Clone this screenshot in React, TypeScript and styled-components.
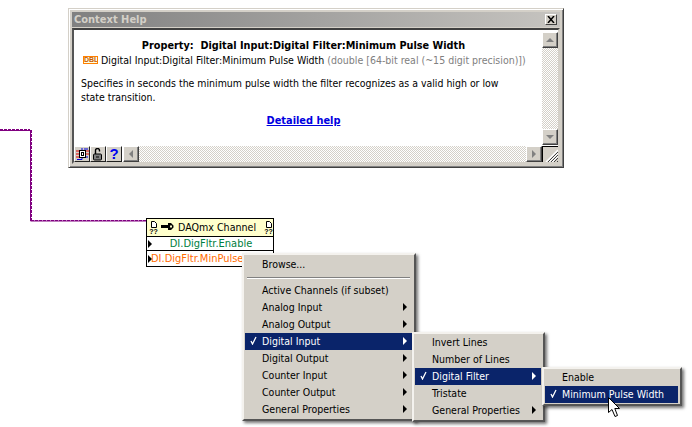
import React from "react";
import styled, { createGlobalStyle } from "styled-components";

const Global = createGlobalStyle`
  html, body { margin: 0; padding: 0; background: #fff; }
  body { font-family: "DejaVu Sans Condensed", "DejaVu Sans", sans-serif; font-size: 11px; color: #000; }
`;

const Canvas = styled.div`
  position: relative;
  width: 692px;
  height: 427px;
  overflow: hidden;
  background: #fff;
`;

const WireDrawing = styled.svg`
  position: absolute;
  left: 0;
  top: 0;
`;

/* ---------- Context Help window ---------- */
const HelpWindow = styled.section`
  position: absolute;
  left: 68px;
  top: 8px;
  box-sizing: border-box;
  width: 496px;
  height: 160px;
  padding: 3px;
  display: flex;
  flex-direction: column;
  gap: 1px;
  background: #d4d0c8;
  border: 1px solid;
  border-color: #d4d0c8 #404040 #404040 #d4d0c8;
  box-shadow: inset 1px 1px #fff, inset -1px -1px #808080;
`;

const TitleBar = styled.header`
  height: 15px;
  flex: none;
  display: flex;
  align-items: center;
  justify-content: space-between;
  padding: 0 3px 0 2px;
  background: linear-gradient(90deg, #808080, #c6c4c0);
  color: #d4d0c8;
  font-weight: bold;
  font-size: 11px;
`;

const CloseButton = styled.span`
  width: 12px;
  height: 11px;
  box-sizing: border-box;
  display: flex;
  align-items: center;
  justify-content: center;
  background: #d4d0c8;
  border: 1px solid;
  border-color: #fff #404040 #404040 #fff;
`;

const Body = styled.div`
  flex: 1;
  min-height: 0;
  display: flex;
  flex-direction: column;
  border: 2px solid;
  border-color: #404040 #d4d0c8 #d4d0c8 #555;
`;

const ContentRow = styled.div`
  flex: 1;
  min-height: 0;
  display: flex;
`;

const HelpText = styled.div`
  flex: 1;
  background: #fff;
  padding: 9px 10px 0 7px;
  line-height: 14px;
  font-size: 10.45px;
`;

const HelpTitle = styled.div`
  text-align: center;
  font-weight: bold;
  font-size: 10.8px;
  padding-right: 6px;
`;

const Signature = styled.div`
  display: flex;
  align-items: center;
  gap: 3px;
  margin: 0 0 0 2px;
  white-space: nowrap;
  font-size: 10.5px;
`;

const TypeChip = styled.span`
  width: 15px;
  height: 8px;
  box-sizing: border-box;
  border: 1px solid #ff8000;
  background: #ffffe0;
  color: #c85a00;
  font: bold 7px/6px "Liberation Sans", sans-serif;
  text-align: center;
  overflow: hidden;
`;

const Muted = styled.span`
  color: #808080;
`;

const Description = styled.p`
  margin: 9px 0 0;
`;

const HelpLink = styled.a`
  display: block;
  margin-top: 10px;
  padding-right: 6px;
  text-align: center;
  font-weight: bold;
  font-size: 10.9px;
  color: #0000e0;
  text-decoration: underline;
`;

const Dither = `
  background: repeating-conic-gradient(#d4d0c8 0 25%, #fff 0 50%) 0 0 / 2px 2px;
`;

const VScroll = styled.div`
  width: 16px;
  flex: none;
  display: flex;
  flex-direction: column;
  background: #fff;
  padding: 2px 0 1px;
  box-sizing: border-box;
`;

const Track = styled.div`
  flex: 1;
  ${Dither}
`;

const ScrollButton = styled.span`
  flex: none;
  width: 16px;
  height: 16px;
  box-sizing: border-box;
  display: flex;
  align-items: center;
  justify-content: center;
  background: #d4d0c8;
  border: 1px solid;
  border-color: #fff #404040 #404040 #fff;
  box-shadow: inset -1px -1px #808080;
`;

const Tri = styled.i<{ $dir: "up" | "down" | "left" | "right"; $color?: string }>`
  display: block;
  width: 0;
  height: 0;
  border-style: solid;
  border-color: transparent;
  ${(p) =>
    p.$dir === "up"
      ? `border-width: 0 4px 4px; border-bottom-color: ${p.$color ?? "#808080"};`
      : p.$dir === "down"
      ? `border-width: 4px 4px 0; border-top-color: ${p.$color ?? "#808080"};`
      : p.$dir === "left"
      ? `border-width: 4px 4px 4px 0; border-right-color: ${p.$color ?? "#808080"};`
      : `border-width: 4px 0 4px 4px; border-left-color: ${p.$color ?? "#808080"};`}
`;

const BottomRow = styled.div`
  flex: none;
  height: 16px;
  display: flex;
  background: #fff;
`;

const ToolButton = styled.span`
  flex: none;
  width: 16px;
  height: 16px;
  box-sizing: border-box;
  display: flex;
  align-items: center;
  justify-content: center;
  background: #d4d0c8;
  border: 1px solid;
  border-color: #fff #202020 #202020 #fff;
  color: #0000f0;
  font: bold 15px/14px "Liberation Sans", sans-serif;
`;

const LeftButton = styled(ScrollButton)`
  margin-left: 1px;
`;

const HTrack = styled.div`
  flex: 1;
  ${Dither}
`;

const Grip = styled.div`
  flex: none;
  width: 16px;
  height: 16px;
  box-sizing: border-box;
  background: #d4d0c8;
  border-top: 1px solid #000;
  border-left: 1px solid #000;
  display: flex;
  align-items: flex-end;
  justify-content: flex-end;
`;

/* ---------- Property node ---------- */
const PropertyNode = styled.div`
  position: absolute;
  left: 146px;
  top: 218px;
  width: 128px;
  box-sizing: border-box;
  border: 1px solid #000;
  background: #fff;
`;

const NodeHeader = styled.div`
  height: 17px;
  display: flex;
  align-items: center;
  padding: 0 1px 0 3px;
  background: #ffffcc;
  font-size: 10.6px;
`;

const NodeGlyph = styled.span`
  flex: none;
  width: 7px;
  display: flex;
  flex-direction: column;
  align-items: center;
  font: bold 7px/7px "Liberation Sans", sans-serif;
`;

const NodeTitle = styled.span`
  flex: 1;
  display: flex;
  align-items: center;
  gap: 4px;
  padding: 0 0 2px 4px;
  white-space: nowrap;
`;

const NodeRow = styled.div<{ $tone: string; $height: number }>`
  height: ${(p) => p.$height}px;
  display: flex;
  align-items: center;
  padding-left: 1px;
  border-top: 1px solid #000;
  color: ${(p) => p.$tone};
  white-space: nowrap;
`;

const RowLabel = styled.span<{ $center?: boolean }>`
  ${(p) => (p.$center ? "flex: 1; text-align: center; padding-right: 3px;" : "margin-left: -1px;")}
`;

/* ---------- Context menus ---------- */
const Menu = styled.div<{ $left: number; $top: number; $width: number }>`
  position: absolute;
  left: ${(p) => p.$left}px;
  top: ${(p) => p.$top}px;
  width: ${(p) => p.$width}px;
  box-sizing: border-box;
  padding: 0 2px 1px 1px;
  background: #d4d0c8;
  border: 2px solid;
  border-color: #f4f2ee #555 #555 #f4f2ee;
  box-shadow: 2px 2px 3px rgba(0, 0, 0, 0.55);
`;

const Item = styled.div<{ $active?: boolean }>`
  height: 17px;
  box-sizing: border-box;
  display: flex;
  align-items: center;
  padding: 0 5px 2px 0;
  white-space: nowrap;
  font-size: 10.5px;
  background: ${(p) => (p.$active ? "#0a246a" : "transparent")};
  color: ${(p) => (p.$active ? "#fff" : "#000")};
`;

const BrowseItem = styled(Item)`
  margin-top: 1px;
`;

const CheckSlot = styled.span`
  flex: none;
  width: 17px;
  display: flex;
  justify-content: center;
`;

const ItemLabel = styled.span`
  flex: 1;
`;

const Separator = styled.hr`
  margin: 4px 2px 3px;
  height: 0;
  border: 0;
  border-top: 1px solid #808080;
  border-bottom: 1px solid #fff;
`;

const CursorDrawing = styled.svg`
  position: absolute;
  left: 607px;
  top: 397px;
`;

type MenuRow = { label: string; sub?: boolean; active?: boolean };

const Check = () => (
  <svg width="7" height="9" viewBox="0 0 7 9">
    <path d="M1 5 L2.5 8 L6 1" fill="none" stroke="currentColor" strokeWidth="1.3" />
  </svg>
);

const Row = ({ label, sub, active }: MenuRow) => (
  <Item $active={active}>
    <CheckSlot>{active && <Check />}</CheckSlot>
    <ItemLabel>{label}</ItemLabel>
    {sub && <Tri $dir="right" $color={active ? "#fff" : "#000"} />}
  </Item>
);

const mainRows: MenuRow[] = [
  { label: "Active Channels (if subset)" },
  { label: "Analog Input", sub: true },
  { label: "Analog Output", sub: true },
  { label: "Digital Input", sub: true, active: true },
  { label: "Digital Output", sub: true },
  { label: "Counter Input", sub: true },
  { label: "Counter Output", sub: true },
  { label: "General Properties", sub: true },
];

const inputRows: MenuRow[] = [
  { label: "Invert Lines" },
  { label: "Number of Lines" },
  { label: "Digital Filter", sub: true, active: true },
  { label: "Tristate" },
  { label: "General Properties", sub: true },
];

const filterRows: MenuRow[] = [
  { label: "Enable" },
  { label: "Minimum Pulse Width", active: true },
];

const PageGlyph = () => (
  <svg width="6" height="7" viewBox="0 0 6 7">
    <path d="M0.5 0.5H3.5L5.5 2.5V6.5H0.5Z" fill="#fff" stroke="#000" />
  </svg>
);

const Terminal = () => (
  <svg width="4" height="8" viewBox="0 0 4 8">
    <path d="M0 0L4 4L0 8Z" fill="#000" />
  </svg>
);

export default function App() {
  return (
    <Canvas>
      <Global />
      <WireDrawing width="147" height="222" viewBox="0 0 147 222">
        <g fill="none" stroke="#800080">
          <path d="M0 130.5H31M30.5 221H147" strokeWidth="1" />
          <path d="M0 129.5H30M31 220.5H147" strokeWidth="1" strokeDasharray="3 1" />
          <path d="M30.5 130V221" strokeWidth="1" />
          <path d="M31.5 130V221" strokeWidth="1" strokeDasharray="3 1" />
        </g>
      </WireDrawing>

      <HelpWindow>
        <TitleBar>
          Context Help
          <CloseButton>
            <svg width="8" height="7" viewBox="0 0 8 7">
              <path d="M1 0L7 7M7 0L1 7" stroke="#000" strokeWidth="1.5" />
            </svg>
          </CloseButton>
        </TitleBar>
        <Body>
          <ContentRow>
            <HelpText>
              <HelpTitle>Property:&nbsp; Digital Input:Digital Filter:Minimum Pulse Width</HelpTitle>
              <Signature>
                <TypeChip>DBL</TypeChip>
                <span>
                  Digital Input:Digital Filter:Minimum Pulse Width{" "}
                  <Muted>(double [64-bit real (~15 digit precision)])</Muted>
                </span>
              </Signature>
              <Description>
                Specifies in seconds the minimum pulse width the filter recognizes as a valid high or low
                <br />
                state transition.
              </Description>
              <HelpLink>Detailed help</HelpLink>
            </HelpText>
            <VScroll>
              <ScrollButton>
                <Tri $dir="up" />
              </ScrollButton>
              <Track />
              <ScrollButton>
                <Tri $dir="down" />
              </ScrollButton>
            </VScroll>
          </ContentRow>
          <BottomRow>
            <ToolButton>
              <svg width="13" height="13" viewBox="0 0 13 13">
                <path d="M0 3H4M9 3H13M0 9H4" stroke="#e00000" />
                <path d="M0 6H4M9 6H13" stroke="#e00000" />
                <path d="M1 11.5H6V9M9 9H12" stroke="#0000e0" fill="none" />
                <path d="M6 0V3M8 1H12" stroke="#0000e0" fill="none" />
                <rect x="3.5" y="2.5" width="6" height="7" fill="#fff" stroke="#000" />
                <rect x="5.5" y="4.5" width="2" height="3" fill="none" stroke="#000" />
              </svg>
            </ToolButton>
            <ToolButton>
              <svg width="12" height="13" viewBox="0 0 12 13">
                <path d="M3.5 6V2.5A2 2 0 0 1 7.5 2.5V3.5" fill="none" stroke="#000" strokeWidth="1.4" />
                <rect x="1.5" y="6" width="8" height="6" rx="1" fill="#808080" stroke="#000" />
                <path d="M4 9H7" stroke="#000" />
              </svg>
            </ToolButton>
            <ToolButton>?</ToolButton>
            <LeftButton>
              <Tri $dir="left" />
            </LeftButton>
            <HTrack />
            <ScrollButton>
              <Tri $dir="right" />
            </ScrollButton>
            <Grip>
              <svg width="14" height="14" viewBox="0 0 14 14">
                <path d="M2 14L14 2M5 14L14 5M8 14L14 8" stroke="#fff" strokeWidth="1.4" />
                <path d="M4 14L14 4M7 14L14 7M10 14L14 10M13 14L14 13" stroke="#404040" />
              </svg>
            </Grip>
          </BottomRow>
        </Body>
      </HelpWindow>

      <PropertyNode>
        <NodeHeader>
          <NodeGlyph>
            <PageGlyph />
            ??
          </NodeGlyph>
          <NodeTitle>
            <svg width="13" height="9" viewBox="0 0 13 9">
              <path d="M0 3H7V1H10L12.5 3.5V5.5L10 8H7V6H0Z" fill="#000" />
              <rect x="9" y="3.5" width="2" height="2" fill="#ffffcc" />
            </svg>
            DAQmx Channel
          </NodeTitle>
          <NodeGlyph>
            <PageGlyph />
            ??
          </NodeGlyph>
        </NodeHeader>
        <NodeRow $tone="#008040" $height={13}>
          <Terminal />
          <RowLabel $center>DI.DigFltr.Enable</RowLabel>
        </NodeRow>
        <NodeRow $tone="#ff6a00" $height={15}>
          <Terminal />
          <RowLabel>DI.DigFltr.MinPulseWidth</RowLabel>
        </NodeRow>
      </PropertyNode>

      <Menu $left={242} $top={253} $width={174}>
        <BrowseItem>
          <CheckSlot />
          <ItemLabel>Browse...</ItemLabel>
        </BrowseItem>
        <Separator />
        {mainRows.map((r) => (
          <Row key={r.label} {...r} />
        ))}
      </Menu>

      <Menu $left={412} $top={332} $width={133}>
        {inputRows.map((r) => (
          <Row key={r.label} {...r} />
        ))}
      </Menu>

      <Menu $left={542} $top={367} $width={140}>
        {filterRows.map((r) => (
          <Row key={r.label} {...r} />
        ))}
      </Menu>

      <CursorDrawing width="14" height="21" viewBox="0 0 14 21">
        <path
          d="M1.5 0.5V15.5L5 12.5L8 19.5L10.5 18.5L7.8 11.5H12.5Z"
          fill="#fff"
          stroke="#000"
          strokeWidth="1"
        />
      </CursorDrawing>
    </Canvas>
  );
}
